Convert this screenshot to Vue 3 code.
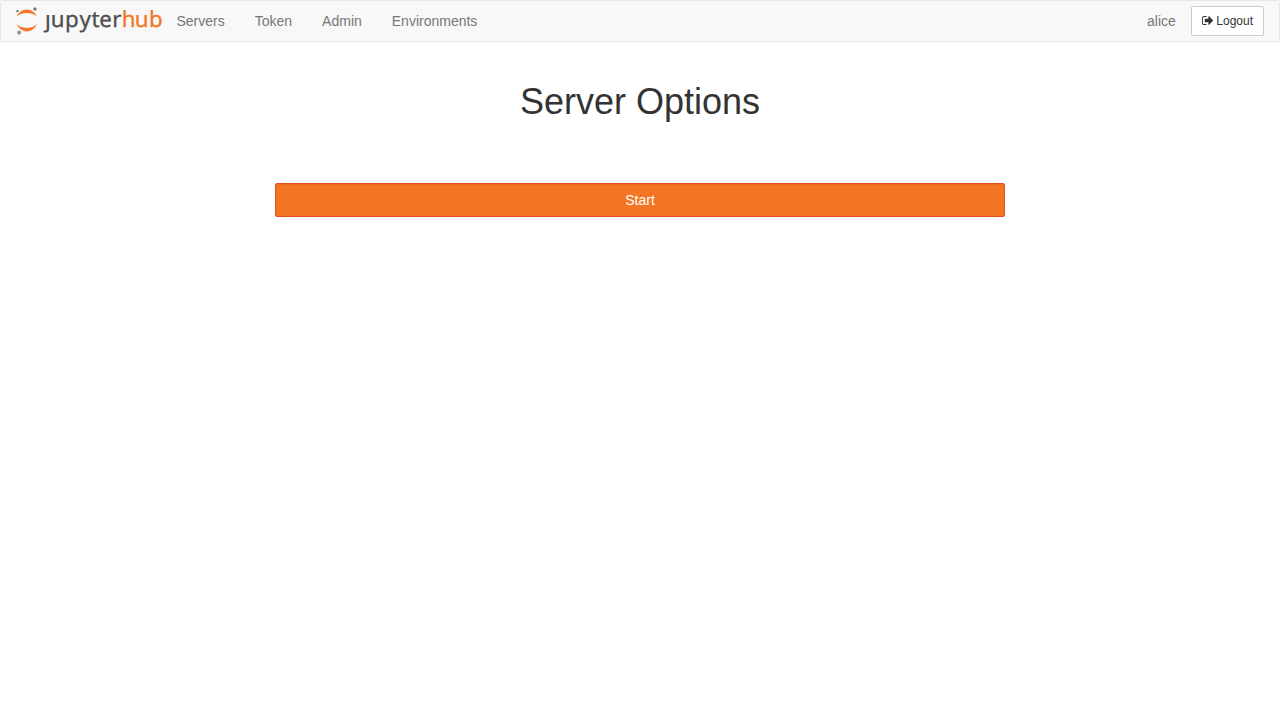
<script setup>
const links = ['Servers', 'Token', 'Admin', 'Environments']
</script>

<template>
  <div class="page">
    <nav class="navbar">
      <a class="brand">
        <svg width="147" height="30" viewBox="0 0 147 30" aria-label="jupyterhub">
          <path class="orange" d="M.7 10.800C2.500 6.300 6.300 3.500 10.800 3.500S19.100 6.300 20.900 10.800C18.400 8.200 15 7 10.800 7S3.200 8.200 .7 10.800Z" />
          <path class="orange" d="M.7 18.100C2.500 22.600 6.300 25.400 10.800 25.400S19.100 22.600 20.900 18.100C18.400 20.700 15 21.900 10.800 21.900S3.200 20.700 .7 18.100Z" />
          <circle cx="18.900" cy="2.900" r="1.700" fill="#767677" />
          <circle cx="1.500" cy="5.100" r="1.200" fill="#616262" />
          <circle cx="3.100" cy="26.600" r="2.100" fill="#989798" />
          <text class="word" x="29 34.800 49.100 63.500 75.400 83.300 96.200" y="20.6">ȷupyter</text>
          <text class="word orange" x="105.700 118.800 133.100" y="20.6">hub</text>
        </svg>
      </a>
      <a v-for="link in links" :key="link" class="link">{{ link }}</a>
      <div class="user">
        <span>alice</span>
        <a class="logout">
          <svg class="icon" viewBox="0 256 1568 1280" preserveAspectRatio="none" aria-hidden="true">
            <path fill="currentColor" d="M640 1440q0 4 1 20t.5 26.500-3 23.500-10 19.500-20.500 6.500h-320q-119 0-203.500-84.500t-84.500-203.500v-704q0-119 84.500-203.500t203.500-84.500h320q13 0 22.500 9.500t9.500 22.500q0 4 1 20t.5 26.500-3 23.500-10 19.500-20.500 6.500h-320q-66 0-113 47t-47 113v704q0 66 47 113t113 47h312l11.500 1 11.500 3 8 5.500 7 9 2 13.500zM1568 896q0 26-19 45l-544 544q-19 19-45 19t-45-19-19-45v-288h-448q-26 0-45-19t-19-45v-384q0-26 19-45t45-19h448v-288q0-26 19-45t45-19 45 19l544 544q19 19 19 45z" />
          </svg>
          Logout
        </a>
      </div>
    </nav>
    <main class="container">
      <h1>Server Options</h1>
      <button class="start">Start</button>
    </main>
  </div>
</template>

<style>
body {
  background: #fff;
}
</style>

<style scoped>
.page {
  font: 14px/20px "Helvetica Neue", "Liberation Sans", Arial, sans-serif;
  color: #333;
}
.page * {
  box-sizing: border-box;
}
.navbar {
  display: flex;
  align-items: center;
  height: 42px;
  padding: 0 15px;
  border: 1px solid #e7e7e7;
  border-radius: 2px;
  background: #f8f8f8;
  color: #777;
}
.brand {
  display: flex;
  width: 145.500px;
}
.brand svg {
  flex: none;
  overflow: visible;
}
.orange {
  fill: #f37726;
}
.word {
  font: 22.300px "Noto Sans", "Open Sans", sans-serif;
  text-rendering: geometricPrecision;
  stroke: #4e4e4e;
  stroke-width: .3px;
}
.word.orange {
  stroke: #f37726;
}
.word:not(.orange) {
  fill: #4e4e4e;
}
.link {
  padding: 0 15px;
}
.user {
  display: flex;
  align-items: center;
  gap: 15px;
  margin-left: auto;
}
.logout {
  display: flex;
  align-items: center;
  gap: 3.300px;
  height: 30px;
  padding: 0 10px;
  border: 1px solid #ccc;
  border-radius: 2px;
  background: #fff;
  color: #333;
  font-size: 12px;
  line-height: 18px;
}
.icon {
  width: 11.140px;
  height: 9px;
  margin-top: -1px;
}
.container {
  width: 730px;
  margin: 0 auto;
}
h1 {
  margin: 40px 0 61px;
  font-size: 36px;
  font-weight: 500;
  line-height: 40px;
  text-align: center;
}
.start {
  display: block;
  width: 100%;
  height: 34px;
  padding: 0;
  border: 1px solid #e34f21;
  border-radius: 2px;
  background: #f37524;
  box-shadow: inset 0 1px 1px rgba(0, 0, 0, .075);
  color: #fff;
  font: inherit;
}
</style>
